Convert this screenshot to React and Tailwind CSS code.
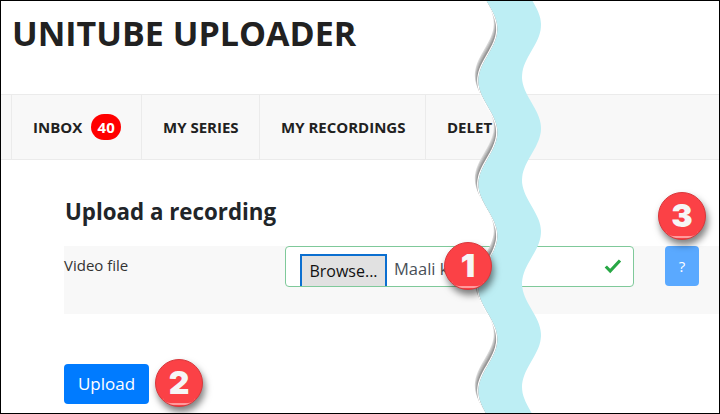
const periodY = 103.4;
const edge = (y, base, phase) => base + 9.5 * Math.sin(((y - phase) / periodY) * 2 * Math.PI + Math.PI / 2);
const pts = (base, phase, dx = 0, dy = 0) => {
  const out = [];
  for (let y = -12; y <= 426; y += 3) out.push([edge(y, base, phase) + dx, y + dy]);
  return out;
};
const line = (p) => p.map(([x, y]) => `${x.toFixed(1)},${y.toFixed(1)}`).join(' L');

function Tear() {
  const left = pts(488, 29);
  const right = pts(531.5, 25);
  const band = `M${line(left)} L${line([...right].reverse())} Z`;
  const layers = [
    [1.0, '#d8d8d8'],
    [0.8, '#c0c0c0'],
    [0.6, '#a8a8a8'],
    [0.4, '#949494'],
    [0.2, '#a0a0a0'],
  ];
  return (
    <svg className="absolute left-0 top-0 pointer-events-none" width="718" height="412" viewBox="1 1 718 412">
      {layers.map(([t, c]) => (
        <path
          key={t}
          d={`M${line(pts(488, 29, -3.2 * t - 0.5, -5.5 * t))} L${line([...left].reverse())} Z`}
          fill={c}
        />
      ))}
      <path d={`M${line(pts(488, 29, -0.8))}`} fill="none" stroke="#ffffff" strokeWidth="1.2" />
      <path d={band} fill="#bdeef4" />
    </svg>
  );
}

function Callout({ n, className }) {
  return (
    <div
      className={`absolute w-12 h-12 rounded-full bg-[#fb4146] border border-[#d8383c] shadow-[2px_5px_7px_rgba(0,0,0,0.5)] flex items-center justify-center overflow-hidden ${className}`}
    >
      <div className="absolute left-[7px] right-[7px] bottom-[1px] h-[7px] rounded-b-full border-b-2 border-[#ff9a9c]" />
      <span className="relative font-['Inter',sans-serif] font-black text-[32px] leading-none text-[#f6f6f6]">{n}</span>
    </div>
  );
}

export default function App() {
  return (
    <div className="relative box-border w-[720px] h-[414px] overflow-hidden bg-white border border-black font-['Open_Sans',sans-serif] text-[#212529]">
      <header className="h-[93px] pl-[11px] pt-[11px]">
        <h1 className="text-[34px] leading-[42px] font-bold text-[#212121] whitespace-nowrap">UNITUBE UPLOADER</h1>
      </header>
      <nav className="flex h-[66px] bg-[#f8f8f8] border-y border-[#ebebeb] text-[15px] font-bold text-[#212121] whitespace-nowrap">
        <div className="w-[11px] border-r border-[#ebebeb]" />
        <div className="w-[130px] pl-[21px] flex items-center border-r border-[#ebebeb]">
          INBOX
          <span className="ml-[9px] w-[30px] h-[26px] rounded-full bg-[#ff0000] text-white flex items-center justify-center">40</span>
        </div>
        <div className="w-[118px] pl-[21px] flex items-center border-r border-[#ebebeb]">MY SERIES</div>
        <div className="w-[166px] pl-[21px] flex items-center border-r border-[#ebebeb]">MY RECORDINGS</div>
        <div className="pl-[21px] flex items-center">DELET</div>
      </nav>
      <main className="pl-[63px]">
        <h2 className="mt-[36px] pl-px text-[22.3px] leading-[32px] font-bold text-[#212529]">Upload a recording</h2>
        <div className="mt-[18px] h-[68px] bg-[#f8f8f8] flex items-start">
          <div className="w-[221px] pt-[9px] text-[15px] leading-[20px] text-[#333333]">Video file</div>
          <div className="w-[349px] h-[41px] box-border bg-white border border-[#7fc99a] rounded-[4px] flex items-start pl-[14px] pt-[7px] overflow-hidden">
            <div className="w-[87px] h-[40px] shrink-0 box-border bg-[#e1e1e1] border-2 border-[#0b6fd0] pt-[3px] text-center text-[16px] leading-[24px] text-[#111111]">Browse...</div>
            <div className="ml-[7px] pt-[3px] text-[16.5px] leading-[24px] text-[#495057] grow">Maali k</div>
            <svg width="18" height="16" viewBox="0 0 18 16" className="mt-[4px] mr-[11px]">
              <path d="M1.8 8.5 L6.2 13 L16 2.5" fill="none" stroke="#28a745" strokeWidth="3.2" />
            </svg>
          </div>
          <div className="ml-[31px] w-[34px] h-[40px] rounded-[4px] bg-[#5aa9ff] text-white text-[15px] flex items-center justify-center">?</div>
        </div>
        <button className="mt-[50px] block w-[85px] h-[40px] rounded-[4px] bg-[#007bff] text-white text-[17px] text-center">Upload</button>
      </main>
      <Tear />
      <Callout n="1" className="left-[443px] top-[241px]" />
      <Callout n="2" className="left-[154px] top-[358px]" />
      <Callout n="3" className="left-[657px] top-[191px]" />
    </div>
  );
}
